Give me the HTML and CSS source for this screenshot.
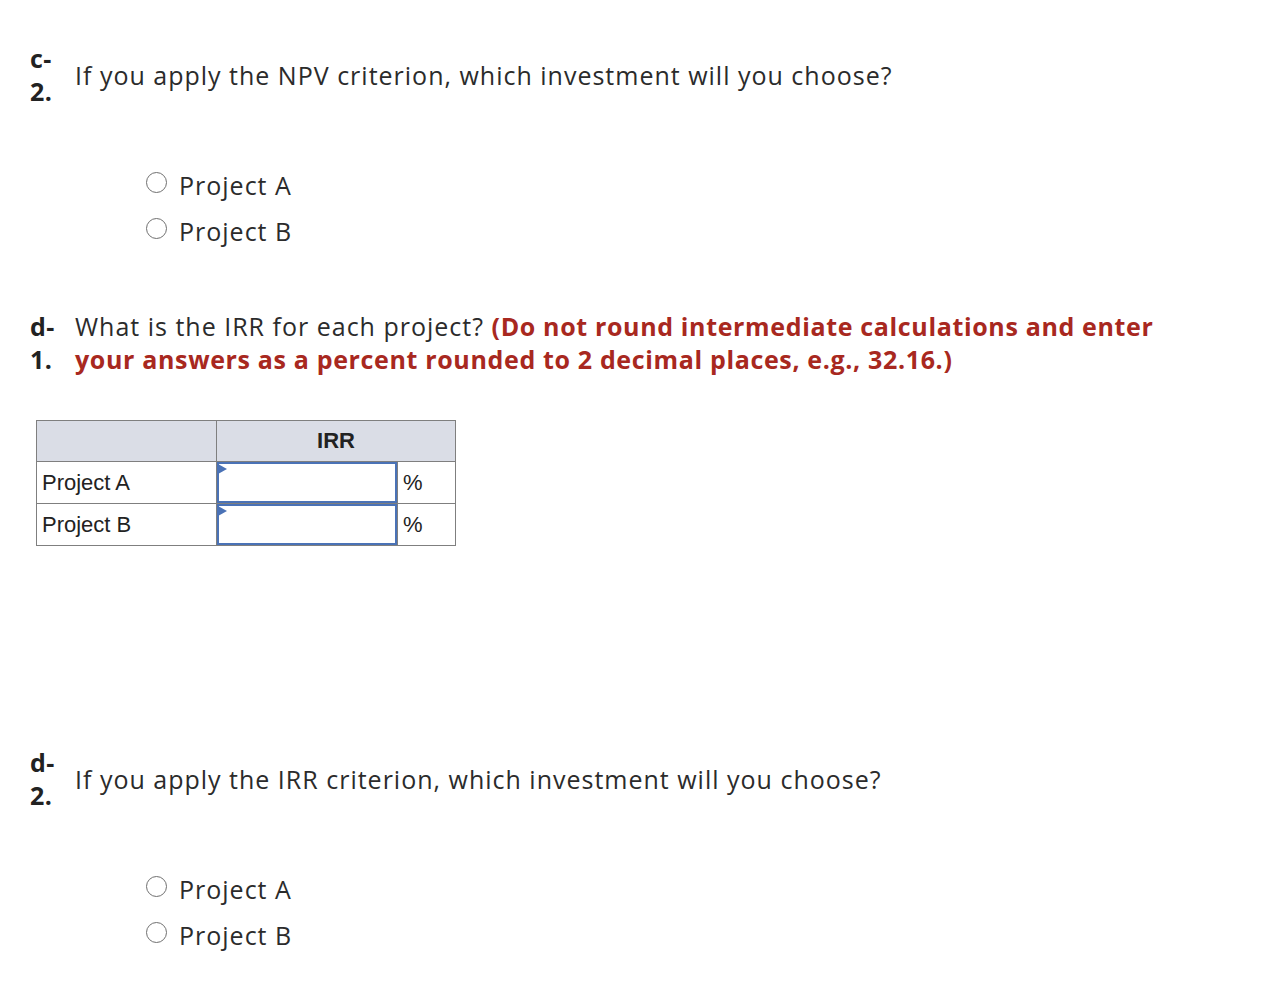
FILE: index.html
```html
<!DOCTYPE html>
<html>
<head>
<meta charset="utf-8">
<link rel="stylesheet" href="styles.css">
</head>
<body>
<div class="page">
  <div class="q q-c2">
    <div class="lbl">c-<br>2.</div>
    <div class="qtext center">If you apply the NPV criterion, which investment will you choose?</div>
  </div>
  <div class="radios r1">
    <div class="radio"><span class="circ"></span><span class="rtext">Project A</span></div>
    <div class="radio"><span class="circ"></span><span class="rtext">Project B</span></div>
  </div>

  <div class="q q-d1">
    <div class="lbl">d-<br>1.</div>
    <div class="qtext">What is the IRR for each project? <span class="red">(Do not round intermediate calculations and enter your answers as a percent rounded to 2 decimal places, e.g., 32.16.)</span></div>
  </div>

  <table class="irr">
    <tr class="hd"><th class="c1"></th><th colspan="2">IRR</th></tr>
    <tr><td class="c1">Project A</td><td class="inp"><div class="box"><span class="tri"></span></div></td><td class="pct">%</td></tr>
    <tr><td class="c1">Project B</td><td class="inp"><div class="box"><span class="tri"></span></div></td><td class="pct">%</td></tr>
  </table>

  <div class="q q-d2">
    <div class="lbl">d-<br>2.</div>
    <div class="qtext center">If you apply the IRR criterion, which investment will you choose?</div>
  </div>
  <div class="radios r2">
    <div class="radio"><span class="circ"></span><span class="rtext">Project A</span></div>
    <div class="radio"><span class="circ"></span><span class="rtext">Project B</span></div>
  </div>
</div>
</body>
</html>
```
FILE: styles.css
```css
html, body { margin: 0; padding: 0; background: #fff; }
body { font-family: "Open Sans", "Lato", sans-serif; color: #2b2b2b; }
.page { padding: 42px 0 0 30px; }
.q { display: flex; font-size: 25px; line-height: 33px; letter-spacing: 1px; }
.lbl { width: 45px; flex: none; font-weight: 700; color: #222; letter-spacing: 0.5px; }
.qtext { flex: 1; max-width: 1085px; }
.qtext.center { align-self: center; }
.red { color: #a82820; font-weight: 700; letter-spacing: 0.65px; }
.radios { margin-left: 116px; }
.r1 { margin-top: 54px; }
.radio { display: flex; align-items: center; height: 46px; font-size: 25px; letter-spacing: 1px; }
.circ { width: 21px; height: 21px; border: 1.6px solid #6f6f6f; border-radius: 50%; box-sizing: border-box; margin-right: 12px; position: relative; top: -3px; }
.rtext { color: #2b2b2b; }
.q-d1 { margin-top: 56px; }
.irr { margin: 44px 0 0 6px; border-collapse: collapse; font-family: "Liberation Sans", Arial, sans-serif; font-size: 22px; color: #222; }
.irr th, .irr td { border: 1px solid #7f7f7f; padding: 0; }
.irr .hd th { background: #dadde6; height: 40px; font-weight: 700; }
.irr td { height: 41px; }
.irr .c1 { width: 180px; padding-left: 5px; text-align: left; box-sizing: border-box; }
.irr .inp { width: 180px; }
.irr .pct { width: 58px; padding-left: 5px; box-sizing: border-box; }
.box { height: 41px; border: 2px solid #4a72b6; box-sizing: border-box; position: relative; background: #fff; }
.tri { position: absolute; left: -1px; top: 0; width: 0; height: 0; border-top: 5px solid transparent; border-bottom: 5px solid transparent; border-left: 9px solid #4a72b6; }
.q-d2 { margin-top: 200px; }
.r2 { margin-top: 54px; }
```
